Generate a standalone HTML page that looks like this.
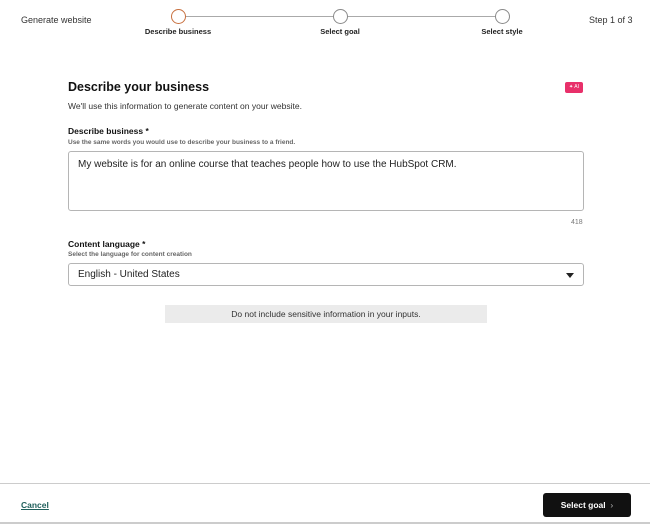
<!DOCTYPE html>
<html><head><meta charset="utf-8">
<style>
*{margin:0;padding:0;box-sizing:border-box}
body{width:650px;height:524px;background:#fff;font-family:"Liberation Sans",sans-serif;color:#222;position:relative;overflow:hidden}
.a{position:absolute;white-space:nowrap}
.circ{position:absolute;width:15px;height:15px;border-radius:50%;border:1.5px solid #8a8a8a;background:#fff;top:9px}
.lab{position:absolute;font-size:7.5px;font-weight:bold;top:27px;transform:translateX(-50%)}
</style></head><body>
<div class="a" style="left:21px;top:15px;font-size:9px;color:#333">Generate website</div>
<div class="a" style="left:589px;top:15px;font-size:9px;color:#333">Step 1 of 3</div>
<div class="a" style="left:178px;top:15.5px;width:324px;height:1.5px;background:#aaa"></div>
<div class="circ" style="left:171px;border-color:#c8703f"></div>
<div class="circ" style="left:333px"></div>
<div class="circ" style="left:495px"></div>
<div class="lab" style="left:178px">Describe business</div>
<div class="lab" style="left:340px">Select goal</div>
<div class="lab" style="left:502px">Select style</div>

<div class="a" style="left:68px;top:80px;font-size:12.5px;font-weight:bold;color:#111">Describe your business</div>
<div class="a" style="left:565px;top:82px;width:18px;height:11px;background:#e8306a;border-radius:2px;color:#fff;font-size:5px;line-height:11px;text-align:center">✦ AI</div>
<div class="a" style="left:68px;top:101px;font-size:8.5px;color:#333">We'll use this information to generate content on your website.</div>
<div class="a" style="left:68px;top:126px;font-size:8.5px;font-weight:bold;color:#111">Describe business *</div>
<div class="a" style="left:68px;top:139px;font-size:6.5px;font-weight:bold;color:#666">Use the same words you would use to describe your business to a friend.</div>
<div class="a" style="left:68px;top:151px;width:516px;height:60px;border:1px solid #b5b5b5;border-radius:3px"></div>
<div class="a" style="left:78px;top:158px;font-size:10px;color:#222;line-height:13px">My website is for an online course that teaches people how to use the HubSpot CRM.</div>
<div class="a" style="left:571px;top:219px;font-size:7px;color:#777">418</div>
<div class="a" style="left:68px;top:239px;font-size:8.5px;font-weight:bold;color:#111">Content language *</div>
<div class="a" style="left:68px;top:251px;font-size:6.5px;font-weight:bold;color:#666">Select the language for content creation</div>
<div class="a" style="left:68px;top:263px;width:516px;height:23px;border:1px solid #b5b5b5;border-radius:3px"></div>
<div class="a" style="left:78px;top:269px;font-size:10px;color:#222;line-height:12px">English - United States</div>
<div class="a" style="left:566px;top:273px;width:0;height:0;border-left:4px solid transparent;border-right:4px solid transparent;border-top:5px solid #222"></div>
<div class="a" style="left:165px;top:305px;width:322px;height:18px;background:#ebebeb;font-size:8.5px;color:#333;text-align:center;line-height:18px">Do not include sensitive information in your inputs.</div>

<div class="a" style="left:0;top:483px;width:650px;height:1px;background:#ccc"></div>
<div class="a" style="left:21px;top:500px;font-size:8.5px;font-weight:bold;color:#1f5f5b;text-decoration:underline">Cancel</div>
<div class="a" style="left:543px;top:493px;width:88px;height:24px;background:#111;border-radius:3px;color:#fff;font-size:8.5px;font-weight:bold;line-height:24px;text-align:center">Select goal &nbsp;<span style="font-weight:normal;color:#bbb">›</span></div>
<div class="a" style="left:0;top:522px;width:650px;height:2px;background:#ccc"></div>
</body></html>
